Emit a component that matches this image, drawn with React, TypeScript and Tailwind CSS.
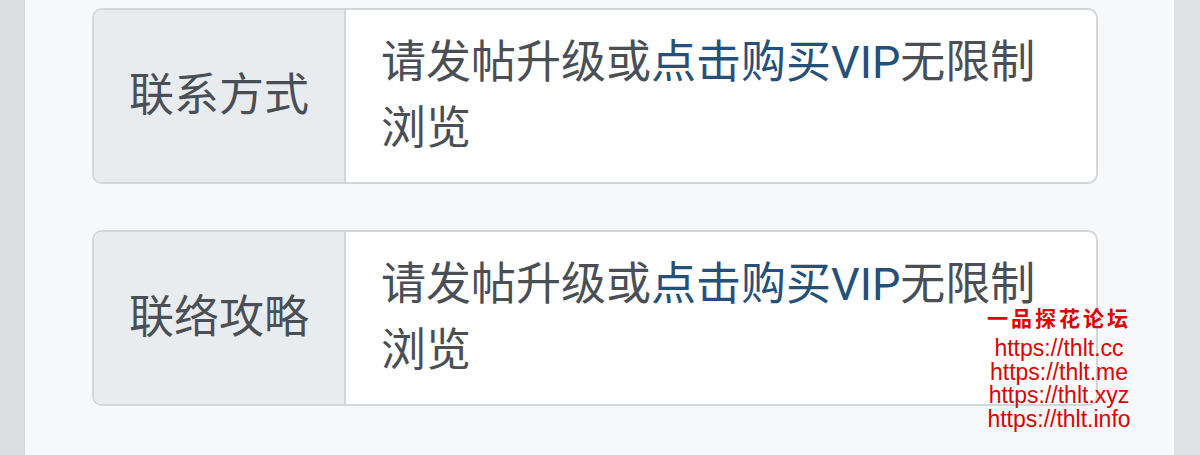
const cjk = "font-['Roboto','Noto_Sans_CJK_SC',sans-serif]";

function Row({ label }: { label: string }) {
  return (
    <div className="flex h-[176px] overflow-hidden rounded-[10px] border-2 border-[#d3d7da] bg-white">
      <div className={`${cjk} flex w-[252px] shrink-0 items-center justify-center border-r-2 border-[#d3d7da] bg-[#e8ecef] text-[45px] text-[#4a4f55]`}>
        {label}
      </div>
      <div className={`${cjk} flex-1 pl-[35px] pr-[28px] pt-[20px] text-[45px] leading-[66px] text-[#4a4f55]`}>
        请发帖升级或<span className="text-[#25507a]">点击购买VIP</span>无限制浏览
      </div>
    </div>
  );
}

export default function App() {
  return (
    <div className="flex h-[455px] w-[1200px] overflow-hidden">
      <div className="w-[25px] shrink-0 border-r border-[#d3d7da] bg-[#dcdfe2]" />
      <div className="relative flex-1 bg-[#f6f8fa]">
        <div className="ml-[67px] mr-[76px] mt-[8px] flex flex-col gap-[46px]">
          <Row label="联系方式" />
          <Row label="联络攻略" />
        </div>

        {/* watermark */}
        <div className="absolute left-[944px] top-[302px] flex w-[180px] flex-col items-center text-[#e00000]">
          <div className="font-['Noto_Sans_CJK_SC',serif] text-[21px] font-semibold leading-[30px] tracking-[3px]">一品探花论坛</div>
          <div className="mt-[5px] text-center font-['Liberation_Sans',sans-serif] text-[23px] leading-[23.5px]">
            <div>https://thlt.cc</div>
            <div>https://thlt.me</div>
            <div>https://thlt.xyz</div>
            <div>https://thlt.info</div>
          </div>
        </div>
      </div>
      <div className="w-[26px] shrink-0 bg-[#dfe2e5]" />
    </div>
  );
}
